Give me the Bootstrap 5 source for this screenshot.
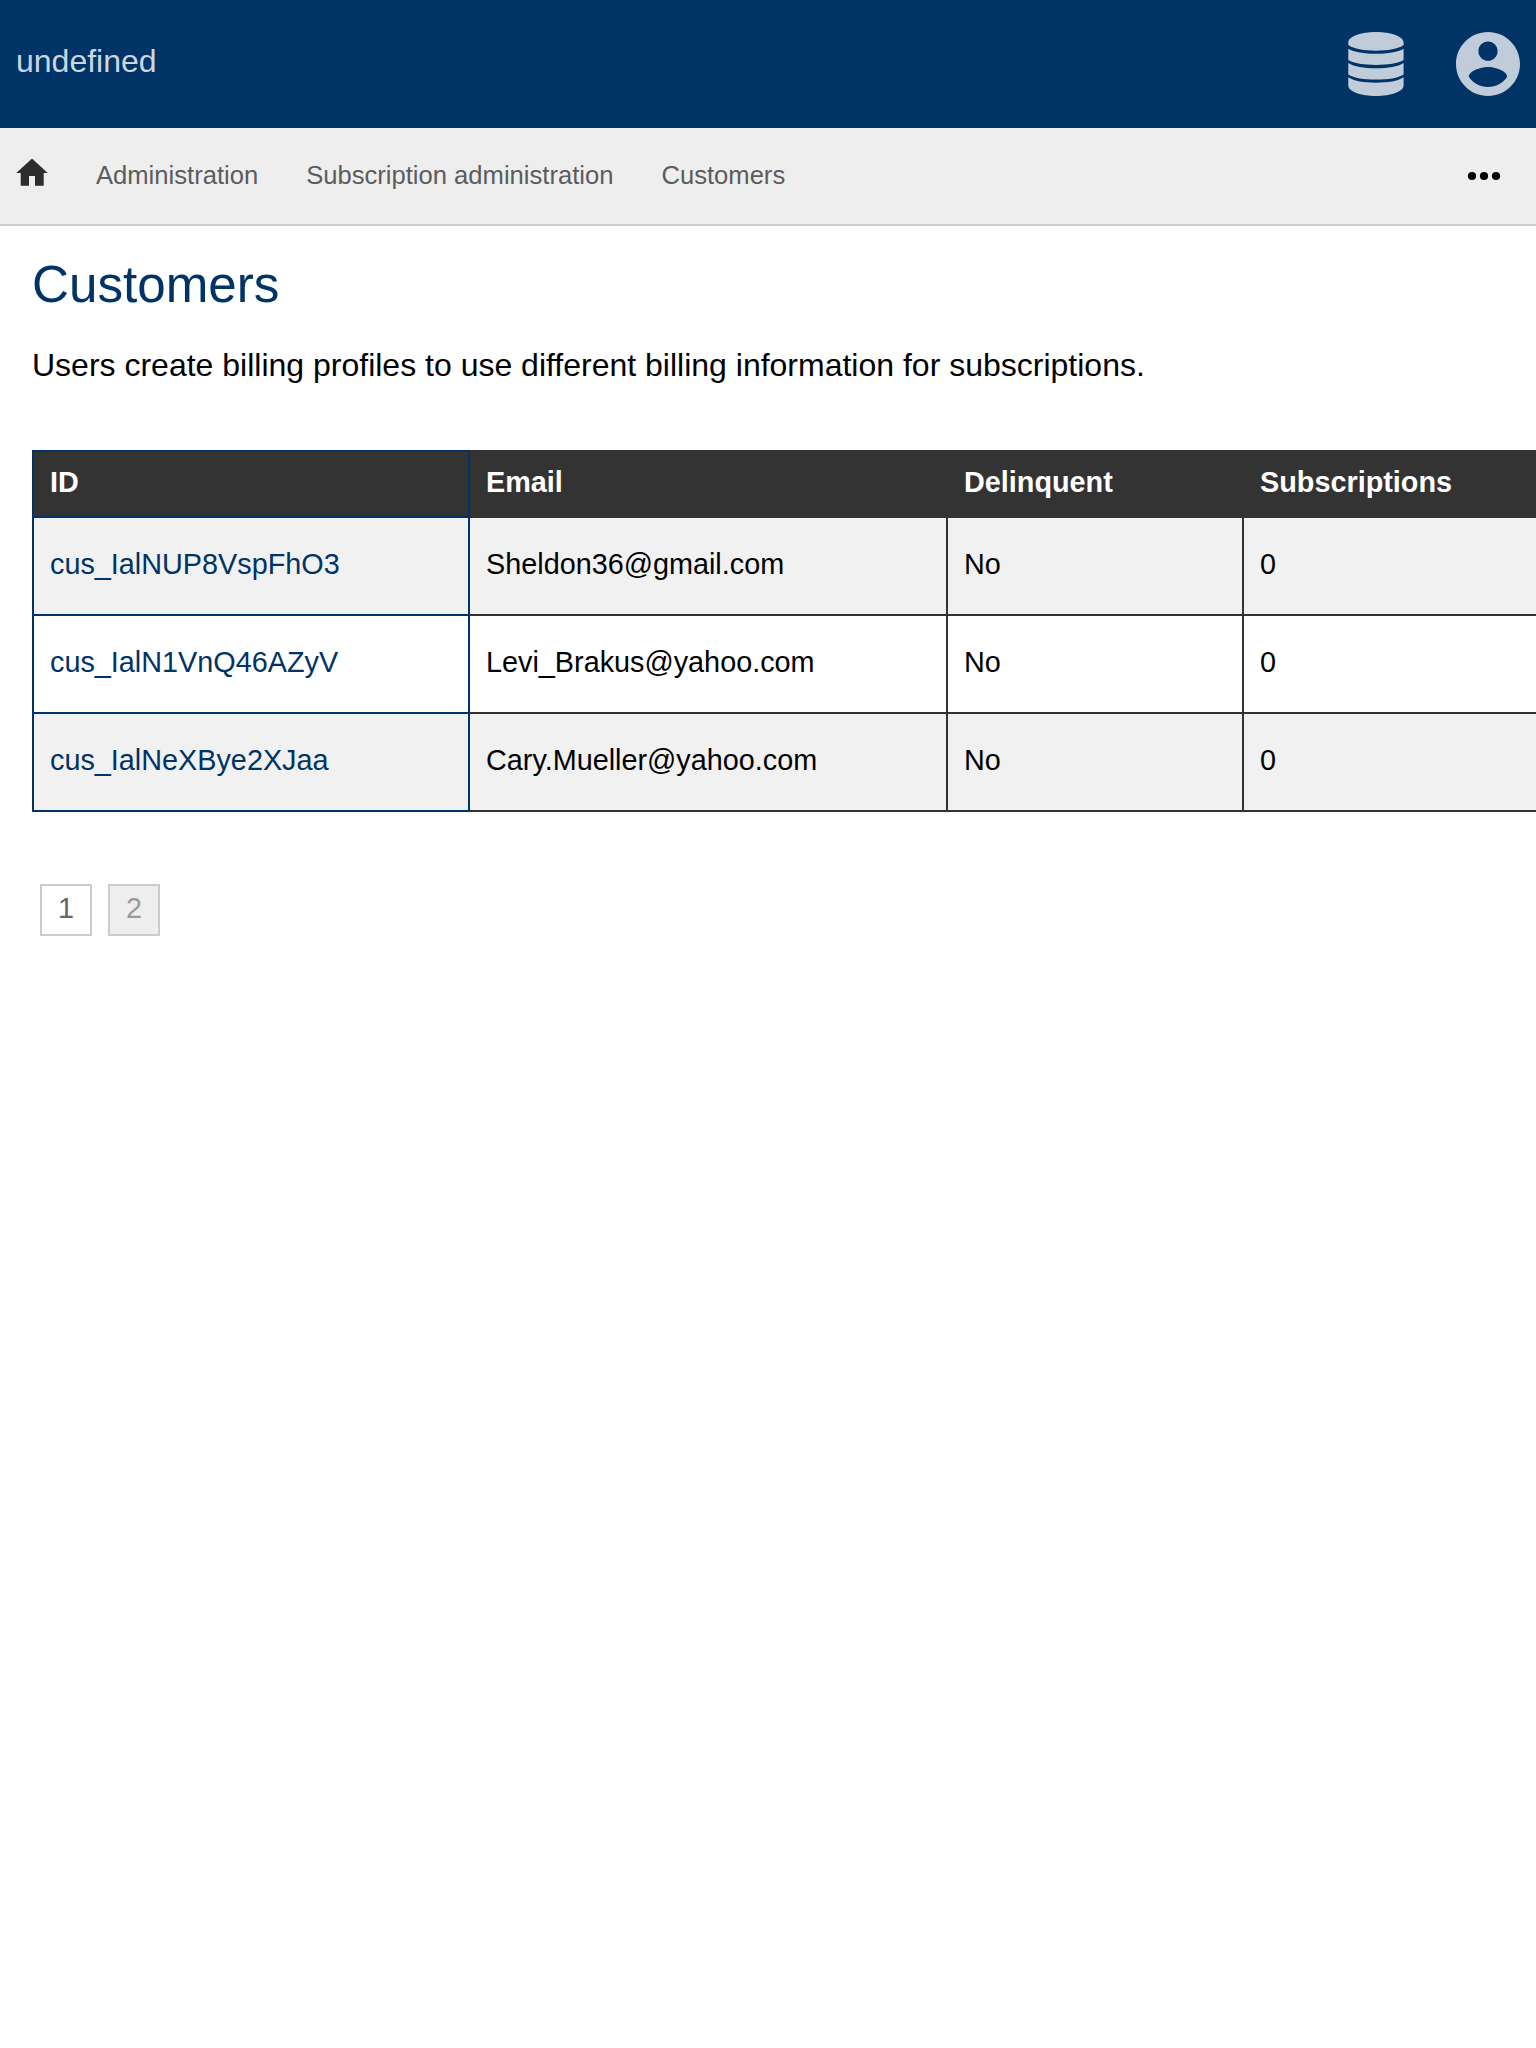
<!DOCTYPE html>
<html lang="en">
<head>
<meta charset="utf-8">
<title>Customers</title>
<meta name="viewport" content="width=device-width, initial-scale=1">
<link href="https://cdn.jsdelivr.net/npm/bootstrap@5.3.0/dist/css/bootstrap.min.css" rel="stylesheet">
<style>
body { font-family: "Liberation Sans", Arial, sans-serif; color: #000; font-size: 32px; line-height: normal; min-height: 100vh; }
.topbar { height: 128px; background: #036; color: #ccd6e0; }
.topbar .brand { line-height: 36px; padding-bottom: 7px; }
.topbar svg { fill: #c0ccd9; }
.tools { gap: 52px; }
.crumbs { height: 98px; background: #eee; border-bottom: 2px solid #ccc; font-size: 25.6px; line-height: 30px; }
.crumbs a { color: #5c5c5c; padding-bottom: 2px; }
.crumbs .home-link { padding-bottom: 12px; }
.crumb-list { gap: 48px; }
.page-body { padding-top: 30px; }
.page-title { font-size: 51.2px; line-height: 58px; color: #036; margin-bottom: 33px; }
.intro { line-height: 36px; margin-bottom: 67px; }
.customers { width: 1640px; table-layout: fixed; border-collapse: separate; border-spacing: 0; font-size: 28.8px; line-height: 32px; }
.customers th, .customers td { border: 0 solid #333; border-width: 0 2px 2px 0; padding: 0 16px 4px; }
.customers th { height: 68px; background: #333; color: #fff; border-top-width: 2px; }
.customers td { height: 98px; }
.customers tr > :first-child { border-color: #036; border-left-width: 2px; }
.customers tbody tr:nth-child(odd) { background: #f1f1f1; }
.customers a { color: #036; }
.pages { gap: 16px; font-size: 28.8px; line-height: 32px; }
.pages a { width: 52px; height: 52px; border: 2px solid #ccc; color: #666; padding-bottom: 4px; }
.pages a.current { background: #eee; color: #999; }
</style>
<script src="https://cdn.jsdelivr.net/npm/bootstrap@5.3.0/dist/js/bootstrap.bundle.min.js"></script>
</head>
<body class="bg-white">
<header class="topbar d-flex align-items-center justify-content-between px-3">
  <span class="brand">undefined</span>
  <div class="tools d-flex align-items-center">
    <svg width="56" height="64" viewBox="0 0 56 64" aria-label="Database"><path d="M.3 10.500C.3 4.500 13 0 28 0S55.600 4.500 55.600 10.500V13C50 17 40 18.700 28 18.700S6 17 .3 13ZM.3 16.700C6 20.200 16 21.700 28 21.700S50 20.200 55.600 16.700V28C50 31.400 40 32.900 28 32.900S6 31.400 .3 28ZM.3 31C6 34.700 16 36.300 28 36.300S50 34.700 55.600 31V42.400C50 46 40 47.500 28 47.500S6 46 .3 42.400ZM.3 45.300C6 49.200 16 50.700 28 50.700S50 49.200 55.600 45.300V53.500C55.600 59.500 43 64 28 64S.3 59.500 .3 53.500Z"/></svg>
    <svg width="64" height="64" viewBox="2 2 20 20" aria-label="Account"><path d="M12 2C6.480 2 2 6.480 2 12s4.480 10 10 10 10-4.480 10-10S17.520 2 12 2zm0 3c1.660 0 3 1.340 3 3s-1.340 3-3 3-3-1.340-3-3 1.340-3 3-3zm0 14.200c-2.500 0-4.710-1.280-6-3.220.030-1.990 4-3.080 6-3.080 1.990 0 5.970 1.090 6 3.080-1.290 1.940-3.500 3.220-6 3.220z"/></svg>
  </div>
</header>
<nav class="crumbs d-flex align-items-center justify-content-between ps-3">
  <div class="crumb-list d-flex align-items-center">
    <a href="#" class="home-link d-flex" aria-label="Home"><svg width="32" height="32" viewBox="0 0 32 32" fill="#2d2d2d"><path d="M16 4.500 .300 19H4.700V31.700H13V22.100H19V31.700H27.700V19H31.700Z"/></svg></a>
    <a href="#" class="text-decoration-none">Administration</a>
    <a href="#" class="text-decoration-none">Subscription administration</a>
    <a href="#" class="text-decoration-none">Customers</a>
  </div>
  <svg class="me-4" width="56" height="32" viewBox="0 0 56 32" aria-label="More"><circle cx="16" cy="16" r="4.100"/><circle cx="28" cy="16" r="4.100"/><circle cx="40" cy="16" r="4.100"/></svg>
</nav>
<main class="page-body ps-4 ms-2">
  <h1 class="page-title fw-normal">Customers</h1>
  <p class="intro">Users create billing profiles to use different billing information for subscriptions.</p>
  <div class="overflow-hidden">
    <table class="customers">
      <colgroup><col style="width:438px"><col style="width:478px"><col style="width:296px"><col></colgroup>
      <thead><tr><th>ID</th><th>Email</th><th>Delinquent</th><th>Subscriptions</th></tr></thead>
      <tbody>
        <tr><td><a href="#" class="text-decoration-none">cus_IalNUP8VspFhO3</a></td><td>Sheldon36@gmail.com</td><td>No</td><td>0</td></tr>
        <tr><td><a href="#" class="text-decoration-none">cus_IalN1VnQ46AZyV</a></td><td>Levi_Brakus@yahoo.com</td><td>No</td><td>0</td></tr>
        <tr><td><a href="#" class="text-decoration-none">cus_IalNeXBye2XJaa</a></td><td>Cary.Mueller@yahoo.com</td><td>No</td><td>0</td></tr>
      </tbody>
    </table>
  </div>
  <nav class="pages d-flex ps-2 mt-5 pt-4">
    <a href="#" class="d-flex align-items-center justify-content-center text-decoration-none">1</a>
    <a href="#" class="current d-flex align-items-center justify-content-center text-decoration-none">2</a>
  </nav>
</main>
</body>
</html>
